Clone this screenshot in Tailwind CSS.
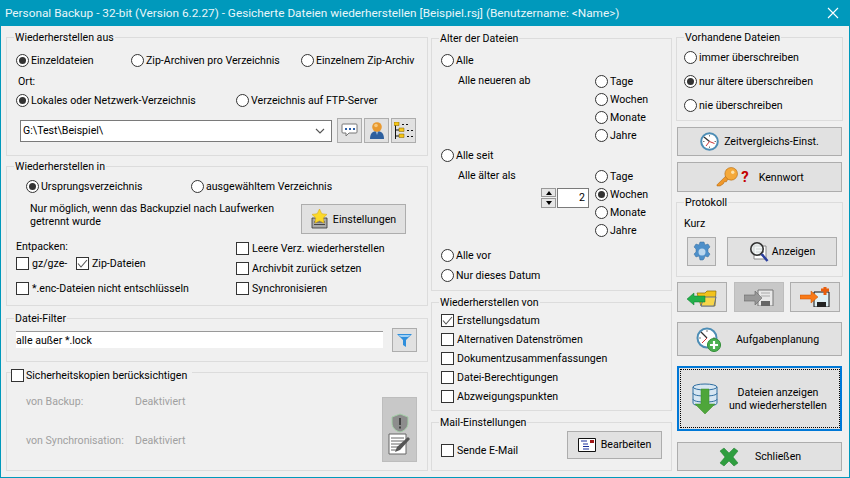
<!DOCTYPE html>
<html lang="de">
<head>
  <meta charset="UTF-8" />
  <title>Personal Backup</title>
  <script src="https://cdn.jsdelivr.net/npm/@tailwindcss/browser@4"></script>
</head>
<body class="m-0 overflow-hidden">
<div class="w-[850px] h-[478px] flex flex-col bg-[#f0f0f0] border border-t-0 border-[#0099bc] text-[#000] font-['Roboto',sans-serif] text-[10.6px] leading-[13px] overflow-hidden">

  <!-- Title bar -->
  <div class="h-[26px] shrink-0 -mx-px bg-[#0099bc] flex items-center justify-between pl-[5px] pr-[11px] text-[#e8f6fa] text-[11.8px]">
    <span>Personal Backup - 32-bit (Version 6.2.27) - Gesicherte Dateien wiederherstellen [Beispiel.rsj] (Benutzername: &lt;Name&gt;)</span>
    <svg width="12" height="12" viewBox="0 0 12 12"><path d="M1 1l10 10M11 1L1 11" stroke="#fff" stroke-width="1.1"/></svg>
  </div>

  <div class="flex pl-[5px] pt-[11px]">
    <!-- Left column -->
    <div class="w-[422px] flex flex-col">

      <!-- Wiederherstellen aus -->
      <div class="relative h-[119px] border border-[#dcdcdc] pt-[12px]">
        <span class="absolute left-[7px] -top-[7px] px-px bg-[#f0f0f0]">Wiederherstellen aus</span>
        <div class="flex h-[20px] items-center pl-[9px]">
          <label class="w-[115px] flex items-center gap-[2px]"><span class="w-[13px] h-[13px] rounded-full border border-[#333] bg-white flex items-center justify-center"><span class="w-[7px] h-[7px] rounded-full bg-[#333]"></span></span>Einzeldateien</label>
          <label class="w-[170px] flex items-center gap-[2px]"><span class="w-[13px] h-[13px] rounded-full border border-[#333] bg-white"></span>Zip-Archiven pro Verzeichnis</label>
          <label class="flex items-center gap-[2px]"><span class="w-[13px] h-[13px] rounded-full border border-[#333] bg-white"></span>Einzelnem Zip-Archiv</label>
        </div>
        <div class="mt-[2px] h-[18px] flex items-center pl-[11px]">Ort:</div>
        <div class="flex h-[20px] items-center pl-[9px]">
          <label class="w-[220px] flex items-center gap-[2px]"><span class="w-[13px] h-[13px] rounded-full border border-[#333] bg-white flex items-center justify-center"><span class="w-[7px] h-[7px] rounded-full bg-[#333]"></span></span>Lokales oder Netzwerk-Verzeichnis</label>
          <label class="flex items-center gap-[2px]"><span class="w-[13px] h-[13px] rounded-full border border-[#333] bg-white"></span>Verzeichnis auf FTP-Server</label>
        </div>
        <div class="mt-[8px] flex items-center pl-[13px]">
          <div class="w-[312px] h-[22px] bg-white border border-[#7a7a7a] flex items-center justify-between pl-[2px] pr-[6px]">
            <span>G:\Test\Beispiel\</span>
            <svg width="10" height="6" viewBox="0 0 10 6"><path d="M1 1l4 4 4-4" fill="none" stroke="#555" stroke-width="1.1"/></svg>
          </div>
          <button class="ml-[5px] w-[25px] h-[25px] bg-[#e1e1e1] border border-[#adadad] flex items-center justify-center">
            <svg width="17" height="15" viewBox="0 0 17 15"><path d="M2 1h13a1 1 0 0 1 1 1v7a1 1 0 0 1-1 1H8l-3 3v-3H2a1 1 0 0 1-1-1V2a1 1 0 0 1 1-1z" fill="#fff" stroke="#777"/><path d="M4 5h2v2H4zM8 5h2v2H8zM12 5h2v2h-2z" fill="#2a5ea8"/></svg>
          </button>
          <button class="ml-[2px] w-[25px] h-[25px] bg-[#e1e1e1] border border-[#adadad] flex items-center justify-center">
            <svg width="16" height="19" viewBox="0 0 16 19"><path d="M1 18c0-6 3-8 7-8s7 2 7 8z" fill="#2d5f9e"/><path d="M6.500 10l1.500 4 1.500-4z" fill="#9ab8d8"/><circle cx="8" cy="6" r="4.800" fill="#e8992f"/><circle cx="7" cy="4.500" r="1.800" fill="#f6c97e"/></svg>
          </button>
          <button class="ml-[2px] w-[25px] h-[25px] bg-[#e1e1e1] border border-[#adadad] flex items-center justify-center">
            <svg width="20" height="18" viewBox="0 0 20 18"><path d="M1.500 3v14M1.500 8H6M1.500 14H6M8 2.500h2M12 2.500h2M13 8.500h2M17 8.500h2M13 14.500h2M17 14.500h2" stroke="#111" fill="none"/><path d="M0 0h5v3.500H0zM5 6h5v3.500H5zM5 12h5v3.500H5z" fill="#f5c518" stroke="#7a5c00" stroke-width=".5"/></svg>
          </button>
        </div>
      </div>

      <!-- Wiederherstellen in -->
      <div class="relative mt-[10px] h-[140px] border border-[#dcdcdc] pt-[10px]">
        <span class="absolute left-[7px] -top-[7px] px-px bg-[#f0f0f0]">Wiederherstellen in</span>
        <div class="flex h-[18px] items-center pl-[19px]">
          <label class="w-[165px] flex items-center gap-[2px]"><span class="w-[13px] h-[13px] rounded-full border border-[#333] bg-white flex items-center justify-center"><span class="w-[7px] h-[7px] rounded-full bg-[#333]"></span></span>Ursprungsverzeichnis</label>
          <label class="flex items-center gap-[2px]"><span class="w-[13px] h-[13px] rounded-full border border-[#333] bg-white"></span>ausgewähltem Verzeichnis</label>
        </div>
        <div class="mt-[2px] flex items-center pl-[23px] h-[36px]">
          <p class="w-[271px]">Nur möglich, wenn das Backupziel nach Laufwerken<br>getrennt wurde</p>
          <button class="mt-[8px] w-[105px] h-[30px] bg-[#e1e1e1] border border-[#adadad] flex items-center justify-center gap-[5px]">
            <svg width="17" height="20" viewBox="0 0 17 20"><path d="M1 9h15v10H1z" fill="#aaa" stroke="#333" stroke-width=".8"/><path d="M3 13h11M3 15.500h11" stroke="#444"/><path d="M8.500 0l2.300 4.700 5.200.7-3.800 3.600.9 5.100-4.600-2.400-4.600 2.400.9-5.100L1 5.400l5.200-.7z" fill="#fbd92a" stroke="#d9a400" stroke-width=".5"/></svg>
            <span>Einstellungen</span>
          </button>
        </div>
        <div class="flex mt-[5px]">
          <div class="w-[229px] pl-[9px]">
            <div class="h-[16px] flex items-center">Entpacken:</div>
            <div class="h-[18px] flex items-center">
              <label class="w-[60px] flex items-center gap-[3px]"><span class="w-[13px] h-[13px] border border-[#333] bg-white"></span>gz/gze-</label>
              <label class="flex items-center gap-[3px]"><span class="w-[13px] h-[13px] border border-[#333] bg-white flex items-center justify-center"><svg width="11" height="9" viewBox="0 0 11 9"><path d="M1 4.500L4 8l6-7" fill="none" stroke="#555" stroke-width="1.100"/></svg></span>Zip-Dateien</label>
            </div>
            <label class="mt-[7px] h-[18px] flex items-center gap-[3px]"><span class="w-[13px] h-[13px] border border-[#333] bg-white"></span>*.enc-Dateien nicht entschlüsseln</label>
          </div>
          <div class="flex flex-col gap-[2px] mt-px">
            <label class="h-[18px] flex items-center gap-[3px]"><span class="w-[13px] h-[13px] border border-[#333] bg-white"></span>Leere Verz. wiederherstellen</label>
            <label class="h-[18px] flex items-center gap-[3px]"><span class="w-[13px] h-[13px] border border-[#333] bg-white"></span>Archivbit zurück setzen</label>
            <label class="h-[18px] flex items-center gap-[3px]"><span class="w-[13px] h-[13px] border border-[#333] bg-white"></span>Synchronisieren</label>
          </div>
        </div>
      </div>

      <!-- Datei-Filter -->
      <div class="relative mt-[12px] h-[44px] border border-[#dcdcdc] pt-[9px] pl-[9px] flex items-start">
        <span class="absolute left-[7px] -top-[7px] px-px bg-[#f0f0f0]">Datei-Filter</span>
        <div class="mt-[3px] w-[367px] h-[17px] bg-white border-t border-[#999] flex items-center">alle außer *.lock</div>
        <button class="ml-[9px] w-[25px] h-[24px] bg-[#e1e1e1] border border-[#adadad] flex items-center justify-center">
          <svg width="15" height="13" viewBox="0 0 15 13"><path d="M0 0h15L9 6v7l-3-2V6z" fill="#2f8fdc"/><path d="M1.500 1h12L11 3H4z" fill="#9fd0f5"/></svg>
        </button>
      </div>

      <!-- Sicherheitskopien -->
      <div class="relative mt-[10px] h-[99px] border border-[#dcdcdc] flex">
        <label class="absolute left-[4px] -top-[4px] pr-[5px] bg-[#f0f0f0] flex items-center gap-[2px]"><span class="w-[13px] h-[13px] border border-[#333] bg-white"></span>Sicherheitskopien berücksichtigen</label>
        <div class="w-[375px] pl-[19px] pt-[21px] text-[#a0a0a0]">
          <div class="flex h-[14px] items-center"><span class="w-[109px]">von Backup:</span><span>Deaktiviert</span></div>
          <div class="flex h-[14px] items-center mt-[25px]"><span class="w-[109px]">von Synchronisation:</span><span>Deaktiviert</span></div>
        </div>
        <button class="mt-[24px] w-[35px] h-[65px] bg-[#c8c8c8] border border-[#bdbdbd] flex flex-col items-center justify-center pt-[8px]">
          <svg width="20" height="20" viewBox="0 0 20 20"><path d="M10 1l8 3v6c0 5-4 8-8 9-4-1-8-4-8-9V4z" fill="#8d8d8d" stroke="#a5cfa8"/><path d="M9 5h2v7H9zM9 13.500h2v2H9z" fill="#444"/></svg>
          <svg width="24" height="22" viewBox="0 0 24 22"><path d="M1 1h17v20H1z" fill="#fff" stroke="#666"/><path d="M3 5h13M3 8h13M3 11h11M3 14h8M3 17h6" stroke="#666"/><path d="M7 19l2-5L20 4l2 2-10 11z" fill="#555"/></svg>
        </button>
      </div>
    </div>

    <!-- Middle column -->
    <div class="ml-[3px] w-[241px] flex flex-col pt-px">
      <div class="relative h-[253px] border border-[#dcdcdc] pt-[12px] pl-[9px]">
        <span class="absolute left-[7px] -top-[7px] px-px bg-[#f0f0f0]">Alter der Dateien</span>
        <label class="h-[18px] flex items-center gap-[2px]"><span class="w-[13px] h-[13px] rounded-full border border-[#333] bg-white"></span>Alle</label>
        <div class="flex h-[78px]">
          <p class="w-[154px] pl-[17px] pt-[5px]">Alle neueren ab</p>
          <div class="flex flex-col pt-[3px]">
            <label class="h-[18px] flex items-center gap-[2px]"><span class="w-[13px] h-[13px] rounded-full border border-[#333] bg-white"></span>Tage</label>
            <label class="h-[18px] flex items-center gap-[2px]"><span class="w-[13px] h-[13px] rounded-full border border-[#333] bg-white"></span>Wochen</label>
            <label class="h-[18px] flex items-center gap-[2px]"><span class="w-[13px] h-[13px] rounded-full border border-[#333] bg-white"></span>Monate</label>
            <label class="h-[18px] flex items-center gap-[2px]"><span class="w-[13px] h-[13px] rounded-full border border-[#333] bg-white"></span>Jahre</label>
          </div>
        </div>
        <label class="-mt-px mb-px h-[18px] flex items-center gap-[2px]"><span class="w-[13px] h-[13px] rounded-full border border-[#333] bg-white"></span>Alle seit</label>
        <div class="flex h-[78px]">
          <div class="w-[154px] relative pt-[4px] pl-[17px]">
            <p>Alle älter als</p>
            <div class="flex ml-[83px] mt-[6px]">
              <div class="w-[15px] flex flex-col gap-px">
                <span class="h-[9px] bg-[#e6e6e6] border border-[#999] flex items-center justify-center"><span class="border-x-[3px] border-x-transparent border-b-[4px] border-b-black"></span></span>
                <span class="h-[10px] bg-[#e6e6e6] border border-[#999] flex items-center justify-center"><span class="border-x-[3px] border-x-transparent border-t-[4px] border-t-black"></span></span>
              </div>
              <div class="w-[32px] h-[20px] ml-px bg-white border border-[#7a7a7a] text-right pr-[3px] leading-[18px]">2</div>
            </div>
          </div>
          <div class="flex flex-col pt-[2px]">
            <label class="h-[18px] flex items-center gap-[2px]"><span class="w-[13px] h-[13px] rounded-full border border-[#333] bg-white"></span>Tage</label>
            <label class="h-[18px] flex items-center gap-[2px]"><span class="w-[13px] h-[13px] rounded-full border border-[#333] bg-white flex items-center justify-center"><span class="w-[7px] h-[7px] rounded-full bg-[#333]"></span></span>Wochen</label>
            <label class="h-[18px] flex items-center gap-[2px]"><span class="w-[13px] h-[13px] rounded-full border border-[#333] bg-white"></span>Monate</label>
            <label class="h-[18px] flex items-center gap-[2px]"><span class="w-[13px] h-[13px] rounded-full border border-[#333] bg-white"></span>Jahre</label>
          </div>
        </div>
        <label class="mt-[3px] h-[18px] flex items-center gap-[2px]"><span class="w-[13px] h-[13px] rounded-full border border-[#333] bg-white"></span>Alle vor</label>
        <label class="mt-[2px] h-[18px] flex items-center gap-[2px]"><span class="w-[13px] h-[13px] rounded-full border border-[#333] bg-white"></span>Nur dieses Datum</label>
      </div>

      <div class="relative mt-[11px] h-[109px] border border-[#dcdcdc] pt-[8px] pl-[9px] flex flex-col gap-px">
        <span class="absolute left-[7px] -top-[7px] px-px bg-[#f0f0f0]">Wiederherstellen von</span>
        <label class="h-[18px] flex items-center gap-[3px]"><span class="w-[13px] h-[13px] border border-[#333] bg-white flex items-center justify-center"><svg width="11" height="9" viewBox="0 0 11 9"><path d="M1 4.500L4 8l6-7" fill="none" stroke="#555" stroke-width="1.100"/></svg></span>Erstellungsdatum</label>
        <label class="h-[18px] flex items-center gap-[3px]"><span class="w-[13px] h-[13px] border border-[#333] bg-white"></span>Alternativen Datenströmen</label>
        <label class="h-[18px] flex items-center gap-[3px]"><span class="w-[13px] h-[13px] border border-[#333] bg-white"></span>Dokumentzusammenfassungen</label>
        <label class="h-[18px] flex items-center gap-[3px]"><span class="w-[13px] h-[13px] border border-[#333] bg-white"></span>Datei-Berechtigungen</label>
        <label class="h-[18px] flex items-center gap-[3px]"><span class="w-[13px] h-[13px] border border-[#333] bg-white"></span>Abzweigungspunkten</label>
      </div>

      <div class="relative mt-[11px] h-[49px] border border-[#dcdcdc] pl-[9px] flex items-center">
        <span class="absolute left-[7px] -top-[7px] px-px bg-[#f0f0f0]">Mail-Einstellungen</span>
        <label class="w-[126px] mt-[8px] h-[18px] flex items-center gap-[3px]"><span class="w-[13px] h-[13px] border border-[#333] bg-white"></span>Sende E-Mail</label>
        <button class="-mt-[4px] w-[95px] h-[28px] bg-[#e1e1e1] border border-[#adadad] flex items-center justify-center gap-[5px]">
          <svg width="18" height="14" viewBox="0 0 18 14"><path d="M.5.500h17v13H.5z" fill="#fff" stroke="#111"/><path d="M12 2h4v3h-4z" fill="#a01818"/><path d="M3 3h6M5 6h5M5 8.500h6M5 11h6" stroke="#1a2f9c"/></svg>
          <span>Bearbeiten</span>
        </button>
      </div>
    </div>

    <!-- Right column -->
    <div class="ml-[4px] w-[167px] flex flex-col">
      <div class="relative h-[84px] border border-[#dcdcdc] pt-[10px] pl-[7px] flex flex-col gap-[6px]">
        <span class="absolute left-[7px] -top-[7px] px-px bg-[#f0f0f0]">Vorhandene Dateien</span>
        <label class="h-[18px] flex items-center gap-[2px]"><span class="w-[13px] h-[13px] rounded-full border border-[#333] bg-white"></span>immer überschreiben</label>
        <label class="h-[18px] flex items-center gap-[2px]"><span class="w-[13px] h-[13px] rounded-full border border-[#333] bg-white flex items-center justify-center"><span class="w-[7px] h-[7px] rounded-full bg-[#333]"></span></span>nur ältere überschreiben</label>
        <label class="h-[18px] flex items-center gap-[2px]"><span class="w-[13px] h-[13px] rounded-full border border-[#333] bg-white"></span>nie überschreiben</label>
      </div>
      <button class="mt-[6px] mx-px h-[29px] bg-[#e1e1e1] border border-[#adadad] flex items-center justify-center gap-[5px]">
        <svg width="19" height="19" viewBox="0 0 19 19"><circle cx="9.500" cy="9.500" r="8.300" fill="#fff" stroke="#4d8db5" stroke-width="2"/><path d="M9.500 3v1.500M9.500 14.500V16M3 9.500h1.500M14.500 9.500H16" stroke="#777"/><path d="M9.500 9.500L4 5" stroke="#333" stroke-width="1.300"/><path d="M9.500 9.500l5 2M9.500 9.500L6 14" stroke="#c33"/></svg>
        <span>Zeitvergleichs-Einst.</span>
      </button>
      <button class="mt-[6px] mx-px h-[30px] bg-[#e1e1e1] border border-[#adadad] flex items-center justify-center gap-[10px]">
        <span class="flex items-center">
          <svg width="25" height="21" viewBox="0 0 22 20"><path d="M1 17l9-9 3 3-2 1-1 2-2 0-1 2-3 2H1z" fill="#f0982a" stroke="#b56a10" stroke-width=".6"/><circle cx="14.500" cy="6.500" r="6" fill="#f5a93a" stroke="#b56a10" stroke-width=".6"/><circle cx="16" cy="5" r="1.600" fill="#fde2a8"/></svg>
          <span class="ml-px text-[15px] leading-[15px] font-bold text-[#c40000]">?</span>
        </span>
        <span>Kennwort</span>
      </button>
      <div class="relative mt-[10px] h-[75px] border border-[#dcdcdc] pl-[7px] pt-[14px]">
        <span class="absolute left-[7px] -top-[7px] px-px bg-[#f0f0f0]">Protokoll</span>
        <p class="h-[13px]">Kurz</p>
        <div class="flex mt-[7px] ml-[3px]">
          <button class="w-[29px] h-[29px] bg-[#e1e1e1] border border-[#adadad] flex items-center justify-center">
            <svg width="22" height="22" viewBox="0 0 22 22"><path d="M9 1h4l1 3 3-1 2 3-2 2 0 3 2 2-2 3-3-1-1 3-1 1H9l-1-4-3 1-2-3 2-2V8L3 6l2-3 3 1z" fill="#4d8fc9" stroke="#3a6f9e" stroke-width=".5"/><circle cx="11" cy="11" r="3.500" fill="#b9d6ee"/></svg>
          </button>
          <button class="ml-[11px] w-[110px] h-[29px] bg-[#e1e1e1] border border-[#adadad] flex items-center justify-center gap-[3px]">
            <svg width="20" height="22" viewBox="0 0 20 22"><path d="M5 5h12v13H5z" fill="#fff" stroke="#888"/><path d="M7 8h8M7 11h8M7 14h8" stroke="#888"/><circle cx="8" cy="8" r="6.200" fill="#eef4f4" fill-opacity=".7" stroke="#333" stroke-width="1.600"/><path d="M12.500 13l6 7" stroke="#2b3f9e" stroke-width="2.500"/></svg>
            <span>Anzeigen</span>
          </button>
        </div>
      </div>
      <div class="mt-[5px] mx-px flex">
        <button class="w-[50px] h-[30px] bg-[#e1e1e1] border border-[#adadad] flex items-center justify-center">
          <svg width="31" height="19" viewBox="0 0 31 19"><path d="M10 5h8l2-2h9l-1 15H14z" fill="#f2c21b" stroke="#8a6a00" stroke-width=".7"/><path d="M14 18l3-9h12l-2 9z" fill="#f7d54a" stroke="#2b4fa8" stroke-width=".7"/><path d="M0 11l7-6v3h11v6H7v3z" fill="#22b04a" stroke="#0d7a2f" stroke-width=".5"/></svg>
        </button>
        <button class="ml-[7px] w-[50px] h-[30px] bg-[#c8c8c8] border border-[#bdbdbd] flex items-center justify-center">
          <svg width="30" height="18" viewBox="0 0 30 18"><path d="M14 2h15v16H14z" fill="#e8e8e8" stroke="#777"/><path d="M17 5h9M17 8h9" stroke="#aaa"/><path d="M17 13h9v5h-9z" fill="#666"/><path d="M0 7h11V3l7 7-7 7v-4H0z" fill="#989898" stroke="#666" stroke-width=".6"/></svg>
        </button>
        <button class="ml-[6px] w-[50px] h-[30px] bg-[#e1e1e1] border border-[#adadad] flex items-center justify-center">
          <svg width="31" height="20" viewBox="0 0 31 20"><path d="M14 5h15v15H14z" fill="#dff0f5" stroke="#111"/><path d="M17 15h9v5h-9z" fill="#222"/><path d="M0 8h11V4l7 6-7 6v-4H0z" fill="#f97a17" stroke="#c55200" stroke-width=".5"/><path d="M21 3h8M25 0v8" stroke="#e85d0c" stroke-width="3"/></svg>
        </button>
      </div>
      <button class="mt-[10px] mx-px h-[34px] bg-[#e1e1e1] border border-[#adadad] flex items-center pl-[18px] gap-[15px]">
        <svg width="25" height="25" viewBox="0 0 25 25"><circle cx="11" cy="11" r="9.500" fill="#fff" stroke="#4d8db5" stroke-width="2"/><path d="M11 3v2M3 11h2M19 11h-2" stroke="#777"/><path d="M11 11L5 5" stroke="#333" stroke-width="1.300"/><path d="M11 11l-5 5" stroke="#c33"/><circle cx="18" cy="18" r="6.500" fill="#4cb050" stroke="#2e8b34"/><path d="M18 14v8M14 18h8" stroke="#fff" stroke-width="2.200"/></svg>
        <span>Aufgabenplanung</span>
      </button>
      <button class="mt-[10px] mx-px h-[65px] bg-[#e1e1e1] border-2 border-[#0078d7] p-px flex">
        <span class="flex-1 border border-dotted border-black flex items-center pl-[11px] gap-[11px]">
          <svg width="26" height="32" viewBox="0 0 26 32"><path d="M1 4v16c0 2 5 3 12 3s12-1 12-3V4z" fill="#d6e6f2" stroke="#2f6ea0"/><ellipse cx="13" cy="4" rx="12" ry="3" fill="#d6e6f2" stroke="#2f6ea0"/><path d="M1 10c0 2 5 3 12 3s12-1 12-3M1 16c0 2 5 3 12 3s12-1 12-3" fill="none" stroke="#2f6ea0"/><path d="M9 6h8v15h6L13 31 3 21h6z" fill="#4ea63a" stroke="#3a8a2a" stroke-width=".5"/></svg>
          <span class="flex-1 text-center pr-[12px] whitespace-nowrap">Dateien anzeigen<br>und wiederherstellen</span>
        </span>
      </button>
      <button class="mt-[11px] mx-px h-[29px] bg-[#e1e1e1] border border-[#adadad] flex items-center justify-center gap-[15px]">
        <svg width="22" height="20" viewBox="0 0 22 20"><path d="M2 4l4-3 5 5 5-5 4 3-5 6 5 6-4 3-5-5-5 5-4-3 5-6z" fill="#2f9e3f" stroke="#1f7a2d" stroke-width=".5"/></svg>
        <span>Schließen</span>
      </button>
    </div>
  </div>
</div>
</body>
</html>
